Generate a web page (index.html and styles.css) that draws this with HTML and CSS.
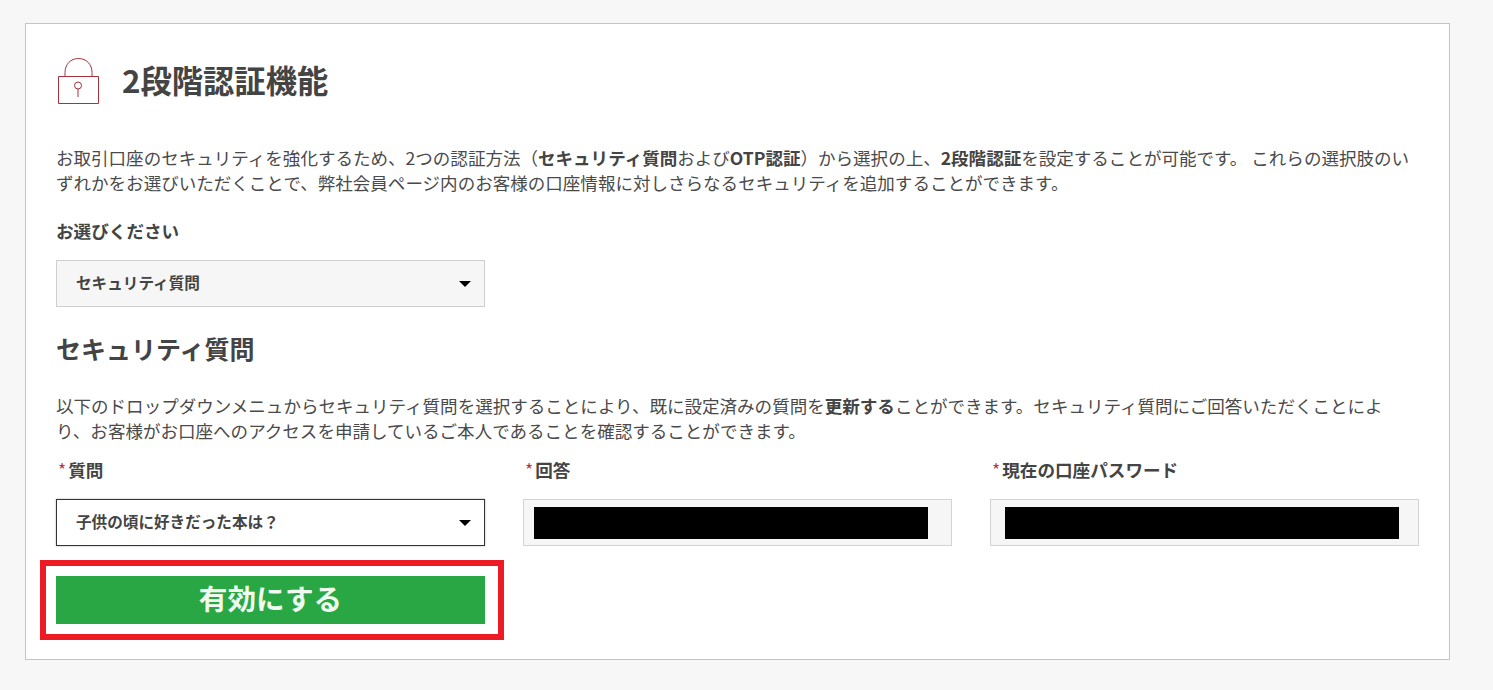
FILE: index.html
```html
<!DOCTYPE html>
<html lang="ja">
<head>
<meta charset="utf-8">
<title>2段階認証機能</title>
<link rel="stylesheet" href="styles.css">
</head>
<body>
<main class="card">
  <header class="title-row">
    <svg class="lock" viewBox="0 0 42 46" width="42" height="46" fill="none" stroke="#a8323c" stroke-width="1">
      <path d="M.5 18.500h40v27H.5z"/>
      <path d="M7 18.500V14.500C7 6.500 12.500.5 20.500.5S34 6.500 34 14.500v4"/>
      <circle cx="20" cy="27.500" r="3.500"/>
      <path d="M20 31v8"/>
    </svg>
    <h1>2段階認証機能</h1>
  </header>
  <p class="intro">お取引口座のセキュリティを強化するため、2つの認証方法（<b>セキュリティ質問</b>および<b>OTP認証</b>）から選択の上、<b>2段階認証</b>を設定することが可能です。 これらの選択肢のい<br>ずれかをお選びいただくことで、弊社会員ページ内のお客様の口座情報に対しさらなるセキュリティを追加することができます。</p>
  <div class="label choose">お選びください</div>
  <div class="select method"><span>セキュリティ質問</span><i class="caret"></i></div>
  <h2>セキュリティ質問</h2>
  <p class="desc">以下のドロップダウンメニュからセキュリティ質問を選択することにより、既に設定済みの質問を<b>更新する</b>ことができます。セキュリティ質問にご回答いただくことによ<br>り、お客様がお口座へのアクセスを申請しているご本人であることを確認することができます。</p>
  <div class="fields">
    <div class="field">
      <div class="label"><span class="req">*</span>質問</div>
      <div class="select focus"><span>子供の頃に好きだった本は？</span><i class="caret"></i></div>
    </div>
    <div class="field">
      <div class="label"><span class="req">*</span>回答</div>
      <div class="input"><div class="redact"></div></div>
    </div>
    <div class="field">
      <div class="label"><span class="req">*</span>現在の口座パスワード</div>
      <div class="input wide-pad"><div class="redact"></div></div>
    </div>
  </div>
  <div class="action">
    <button class="submit" type="button">有効にする</button>
    <div class="highlight"></div>
  </div>
</main>
</body>
</html>
```
FILE: styles.css
```css
* { box-sizing: border-box; }
html, body { margin: 0; height: 100%; overflow: hidden; }
body {
  background: #f7f7f7;
  font-family: "Noto Sans CJK JP", "Open Sans", sans-serif;
  color: #444;
  padding: 23px 43px 0 25px;
}
.card {
  background: #fff;
  border: 1px solid #c4c4c4;
  height: 637px;
  padding: 34px 30px 0;
}
.title-row { display: flex; align-items: center; gap: 22px; height: 46px; }
.lock { flex: none; margin-left: 2px; }
h1 { margin: 0; font-size: 31.300px; line-height: 46px; font-weight: 700; position: relative; top: -1px; }
.intro, .desc { margin: 0; font-size: 17.550px; line-height: 25px; white-space: nowrap; color: #4a4a4a; }
b { font-weight: 700; color: #444; }
.intro { margin-top: 41px; }
.label { height: 24px; font-size: 17.600px; line-height: 22px; font-weight: 700; }
.choose { margin-top: 25px; }
.select {
  display: flex; align-items: center; justify-content: space-between;
  width: 429px; height: 47px; padding: 0 13px 3px 19px;
  font-size: 15.600px; font-weight: 700;
  background: #f6f6f6; border: 1px solid #cfcfcf;
}
.method { margin-top: 16px; }
.caret { width: 0; height: 0; border: 6px solid transparent; border-top: 6px solid #000; border-bottom: 0; position: relative; top: 2px; }
h2 { margin: 22px 0 0; font-size: 25px; line-height: 38px; font-weight: 700; }
.desc { margin-top: 26px; }
.fields { display: grid; grid-template-columns: repeat(3, 429px); column-gap: 38px; margin-top: 16px; }
.field .label { padding-left: 2px; }
.req { color: #b5333f; font-weight: 400; margin-right: 2px; }
.field .select, .input { margin-top: 16px; }
.focus { background: #fff; border-color: #333; box-shadow: 0 0 2px rgba(0,0,0,.3); }
.input { height: 47px; background: #f6f6f6; border: 1px solid #d4d4d4; padding: 7px 10px; }
.wide-pad { padding-left: 14px; }
.redact { width: 394px; height: 32px; background: #000; }
.action { position: relative; width: 429px; margin-top: 30px; }
.submit {
  display: block; width: 100%; height: 48px; border: 0; padding: 0 0 4px;
  background: #2aa745; color: #eefbee;
  font: 700 28.600px/44px "Noto Sans CJK JP", sans-serif;
}
.highlight { position: absolute; left: -16px; top: -16px; width: 464px; height: 80px; border: 6px solid #ed1c24; }
```
